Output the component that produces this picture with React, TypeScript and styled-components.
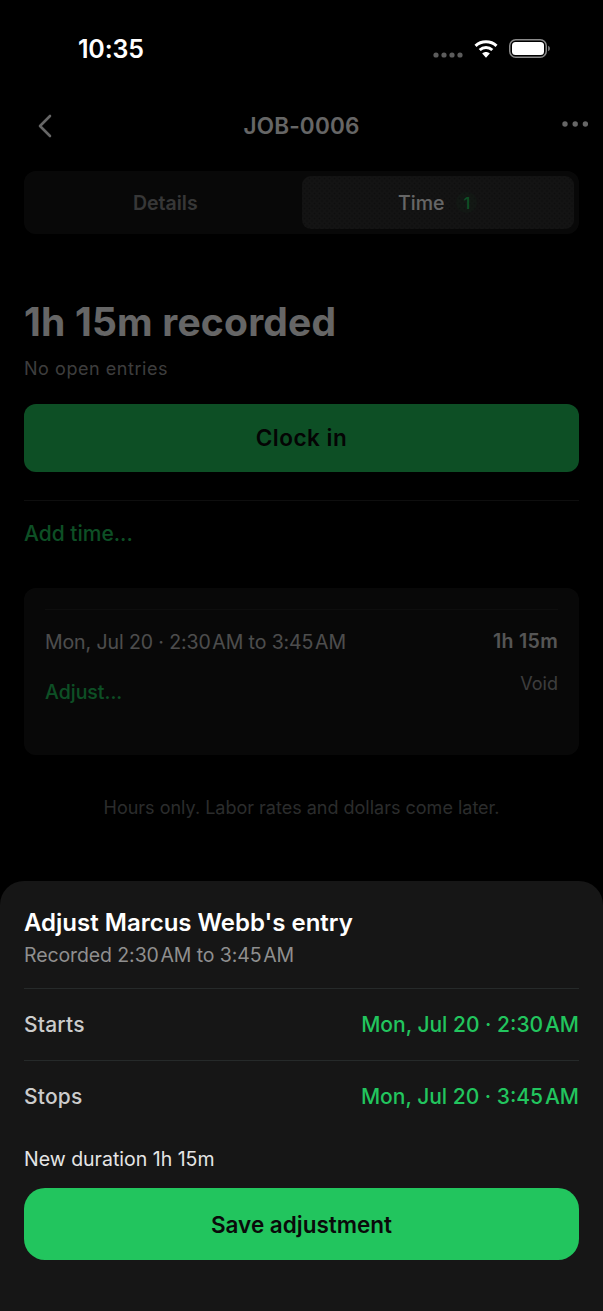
import React from "react";
import styled, { createGlobalStyle } from "styled-components";

const Global = createGlobalStyle`
  html, body { margin: 0; padding: 0; background: #000; }
  body { font-family: Inter, "Liberation Sans", sans-serif; -webkit-font-smoothing: antialiased; }
  * { box-sizing: border-box; }
`;

const Screen = styled.div`
  position: relative;
  width: 603px;
  height: 1311px;
  overflow: hidden;
  background: #000;
`;

const Page = styled.div`
  display: flex;
  flex-direction: column;
  height: 100%;
`;

const StatusBar = styled.div`
  position: relative;
  z-index: 2;
  display: flex;
  align-items: center;
  justify-content: space-between;
  height: 97px;
  padding: 0 53px 0 78px;
`;

const Clock = styled.span`
  font-size: 25px;
  font-weight: 600;
  color: #fff;
  letter-spacing: -0.2px;
`;

const StatusIcons = styled.div`
  display: flex;
  align-items: center;
  gap: 11px;
`;

const SignalSvg = styled.svg`
  margin-top: 13px;
`;

const MoreSvg = styled.svg`
  margin-bottom: 4px;
`;

const Nav = styled.div`
  display: grid;
  grid-template-columns: 1fr auto 1fr;
  align-items: center;
  height: 58px;
  padding: 0 15px;
  margin-bottom: 16px;
`;

const NavStart = styled.div`
  display: flex;
  justify-content: flex-start;
  padding-left: 21px;
`;

const NavEnd = styled.div`
  display: flex;
  justify-content: flex-end;
`;

const NavTitle = styled.h1`
  margin: 0 0 2px 0;
  font-size: 22.5px;
  font-weight: 600;
  letter-spacing: 0.2px;
  color: #fff;
`;

const Body = styled.div`
  display: flex;
  flex-direction: column;
  padding: 0 24px;
`;

const Tabs = styled.div`
  display: grid;
  grid-template-columns: 1fr 1fr;
  height: 63px;
  padding: 5px;
  border-radius: 12px;
  background: #161616;
`;

const Tab = styled.div`
  display: flex;
  align-items: center;
  justify-content: center;
  gap: 12px;
  border-radius: 9px;
  font-size: 19.5px;
  font-weight: 600;
  color: #8a8a8a;
`;

const ActiveTab = styled(Tab)`
  font-weight: 500;
  color: #fff;
  background-color: #323232;
  background-image:
    radial-gradient(rgba(0, 0, 0, 0.3) 0.8px, transparent 1.1px),
    radial-gradient(rgba(0, 0, 0, 0.3) 0.8px, transparent 1.1px);
  background-size: 5px 5px;
  background-position: 0 0, 2.5px 2.5px;
`;

const Count = styled.span`
  display: flex;
  align-items: center;
  justify-content: center;
  width: 21px;
  height: 21px;
  border-radius: 50%;
  font-size: 16.5px;
  font-weight: 500;
  color: #22c55e;
  background: rgba(34, 197, 94, 0.08);
`;

const Recorded = styled.h2`
  margin: 65px 0 0;
  font-size: 39px;
  line-height: 46px;
  font-weight: 700;
  letter-spacing: 0.2px;
  color: #fff;
`;

const OpenEntries = styled.p`
  margin: 12px 0 0;
  font-size: 18px;
  line-height: 23px;
  letter-spacing: 0.55px;
  color: #9a9a9a;
`;

const ClockIn = styled.button`
  height: 68px;
  margin-top: 24px;
  padding: 0 0 2px;
  border: 0;
  border-radius: 12px;
  background: #22c55e;
  color: #0a0a0a;
  font: 600 22.5px Inter, sans-serif;
  letter-spacing: 0.5px;
`;

const Rule = styled.div<{ $light?: boolean }>`
  height: 1px;
  flex: none;
  background: ${(p) => (p.$light ? "#262a2a" : "#242424")};
`;

const RuleGap = styled(Rule)`
  margin-top: 28px;
`;

const SheetRule = styled(Rule)`
  margin-top: 20px;
`;

const AddTime = styled.div`
  margin-top: 19px;
  font-size: 21px;
  line-height: 27px;
  font-weight: 500;
  color: #22c55e;
`;

const EntryCard = styled.div`
  display: flex;
  flex-direction: column;
  height: 167px;
  margin-top: 41px;
  padding: 21px 21px 0;
  border-radius: 12px;
  background: #161616;
`;

const EntryRow = styled.div`
  display: flex;
  justify-content: space-between;
  margin-top: 20px;
`;

const EntryLeft = styled.div`
  display: flex;
  flex-direction: column;
  gap: 25px;
`;

const EntryRight = styled.div`
  display: flex;
  flex-direction: column;
  align-items: flex-end;
  gap: 19px;
`;

const EntryTime = styled.span`
  font-size: 19.5px;
  line-height: 25px;
  letter-spacing: -0.1px;
  color: #c0c0c0;
`;

const EntryDuration = styled.span`
  font-size: 19.5px;
  line-height: 23px;
  font-weight: 600;
  letter-spacing: 0.3px;
  color: #d4d4d4;
`;

const AdjustLink = styled.span`
  font-size: 19.5px;
  line-height: 25px;
  font-weight: 500;
  color: #22c55e;
`;

const VoidLink = styled.span`
  font-size: 18px;
  line-height: 23px;
  color: #9a9a9a;
`;

const Footnote = styled.p`
  margin: 41px 0 0;
  text-align: center;
  font-size: 18px;
  line-height: 23px;
  color: #6b6f6f;
`;

const Scrim = styled.div`
  position: absolute;
  inset: 0;
  background: rgba(0, 0, 0, 0.6);
`;

const Sheet = styled.div`
  position: absolute;
  left: 0;
  right: 0;
  bottom: 0;
  height: 430px;
  display: flex;
  flex-direction: column;
  padding: 26px 24px 0;
  border-radius: 24px 24px 0 0;
  background: #161616;
`;

const SheetTitle = styled.h3`
  margin: 0;
  font-size: 24px;
  line-height: 31px;
  font-weight: 600;
  color: #fff;
`;

const SheetSub = styled.p`
  margin: 5px 0 0;
  font-size: 19.5px;
  line-height: 25px;
  letter-spacing: -0.1px;
  color: #8f8f8f;
`;

const FieldRow = styled.div`
  display: flex;
  align-items: center;
  justify-content: space-between;
  height: 71px;
`;

const FieldLabel = styled.span`
  font-size: 21px;
  font-weight: 500;
  letter-spacing: 0.2px;
  color: #cccccc;
`;

const FieldValue = styled.span`
  font-size: 21px;
  font-weight: 500;
  color: #22c55e;
`;

const Duration = styled.p`
  margin: 15px 0 0;
  font-size: 19.5px;
  line-height: 25px;
  color: #e5e5e5;
`;

const SaveButton = styled.button`
  height: 72px;
  margin-top: 16px;
  border: 0;
  border-radius: 21px;
  background: #22c55e;
  color: #0a0a0a;
  font: 600 22.5px Inter, sans-serif;
`;

const Signal = () => (
  <SignalSvg width="30" height="6" viewBox="0 0 30 6">
    {[3, 11, 19, 27].map((x) => (
      <circle key={x} cx={x} cy="3" r="2.6" fill="#5c5c5c" />
    ))}
  </SignalSvg>
);

const Wifi = () => (
  <svg width="24" height="19" viewBox="0 0 24 19" fill="none" stroke="#fff">
    <path d="M1.5 6.8C7.3 1.4 16.7 1.4 22.5 6.8" strokeWidth="3" />
    <path d="M5.7 11C9.3 7.6 14.7 7.6 18.3 11" strokeWidth="3" />
    <path d="M8.2 14.4 12 18.8 15.8 14.4C13.6 12.4 10.4 12.4 8.2 14.4Z" fill="#fff" strokeWidth="0" />
  </svg>
);

const Battery = () => (
  <svg width="41" height="19" viewBox="0 0 41 19" fill="none">
    <rect x="0.75" y="0.75" width="36.5" height="17.5" rx="6" stroke="#8a8a8a" strokeWidth="1.5" />
    <rect x="3" y="3" width="32" height="13" rx="3.5" fill="#fff" />
    <path d="M39 6.8C40.2 7.2 41 8.2 41 9.5C41 10.8 40.2 11.8 39 12.2Z" fill="#6e6e6e" />
  </svg>
);

const Back = () => (
  <svg width="18" height="24" viewBox="0 0 18 24" fill="none" stroke="#fff" strokeWidth="2.6" strokeLinecap="round" strokeLinejoin="round">
    <path d="M14 2 4 12 14 22" />
  </svg>
);

const More = () => (
  <MoreSvg width="26" height="6" viewBox="0 0 26 6">
    {[3, 13.2, 23.4].map((x) => (
      <circle key={x} cx={x} cy="3" r="2.7" fill="#fff" />
    ))}
  </MoreSvg>
);

export default function App() {
  return (
    <Screen>
      <Global />
      <Page>
        <StatusBar>
          <Clock>10:35</Clock>
          <StatusIcons>
            <Signal />
            <Wifi />
            <Battery />
          </StatusIcons>
        </StatusBar>
        <Nav>
          <NavStart>
            <Back />
          </NavStart>
          <NavTitle>JOB-0006</NavTitle>
          <NavEnd>
            <More />
          </NavEnd>
        </Nav>
        <Body>
          <Tabs>
            <Tab>Details</Tab>
            <ActiveTab>
              Time <Count>1</Count>
            </ActiveTab>
          </Tabs>
          <Recorded>1h 15m recorded</Recorded>
          <OpenEntries>No open entries</OpenEntries>
          <ClockIn>Clock in</ClockIn>
          <RuleGap />
          <AddTime>Add time...</AddTime>
          <EntryCard>
            <Rule />
            <EntryRow>
              <EntryLeft>
                <EntryTime>Mon, Jul 20 · 2:30{"\u200a"}AM to 3:45{"\u200a"}AM</EntryTime>
                <AdjustLink>Adjust...</AdjustLink>
              </EntryLeft>
              <EntryRight>
                <EntryDuration>1h 15m</EntryDuration>
                <VoidLink>Void</VoidLink>
              </EntryRight>
            </EntryRow>
          </EntryCard>
          <Footnote>Hours only. Labor rates and dollars come later.</Footnote>
        </Body>
      </Page>
      <Scrim />
      <Sheet>
        <SheetTitle>Adjust Marcus Webb's entry</SheetTitle>
        <SheetSub>Recorded 2:30{"\u200a"}AM to 3:45{"\u200a"}AM</SheetSub>
        <SheetRule $light />
        <FieldRow>
          <FieldLabel>Starts</FieldLabel>
          <FieldValue>Mon, Jul 20 · 2:30{"\u200a"}AM</FieldValue>
        </FieldRow>
        <Rule $light />
        <FieldRow>
          <FieldLabel>Stops</FieldLabel>
          <FieldValue>Mon, Jul 20 · 3:45{"\u200a"}AM</FieldValue>
        </FieldRow>
        <Duration>New duration 1h 15m</Duration>
        <SaveButton>Save adjustment</SaveButton>
      </Sheet>
    </Screen>
  );
}
